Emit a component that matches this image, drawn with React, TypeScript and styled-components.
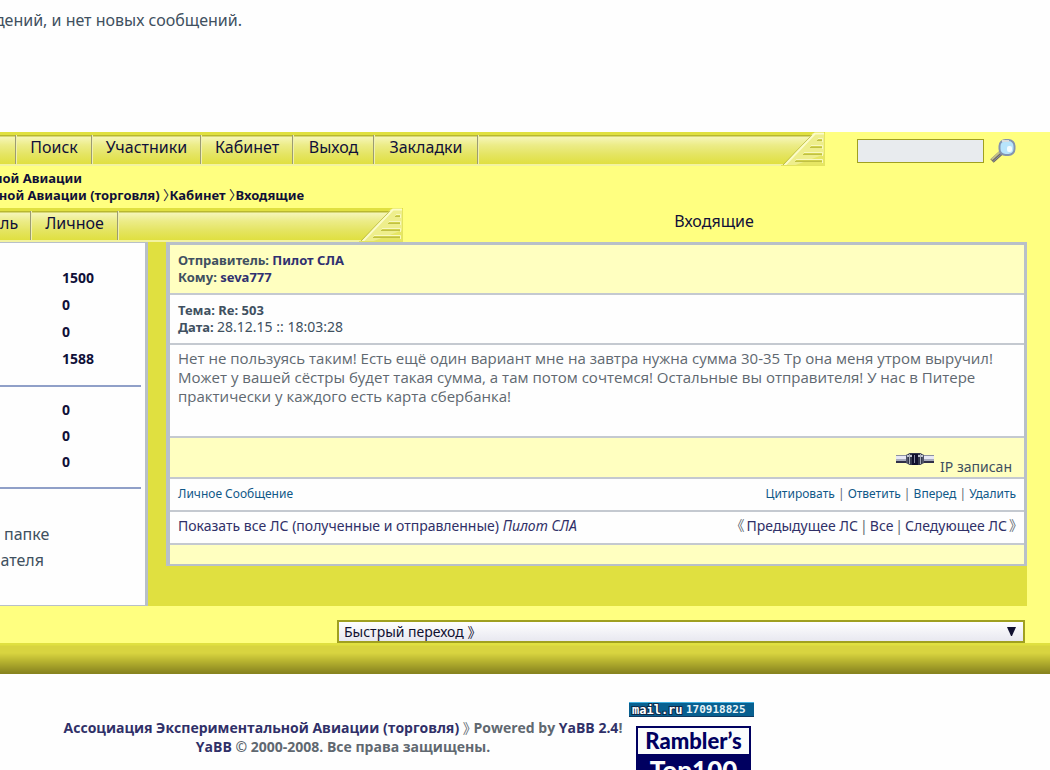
import React from "react";
import styled, { createGlobalStyle } from "styled-components";

const GlobalStyle = createGlobalStyle`
  * { box-sizing: border-box; }
  body {
    margin: 0;
    background: #fefefe;
    color: #606870;
    font-family: "Noto Sans", "Noto Sans CJK SC", sans-serif;
    font-size: 15px;
    line-height: 18px;
    overflow: hidden;
  }
  a { text-decoration: none; color: inherit; }
`;

const Welcome = styled.header`
  height: 132px;
  padding-top: 9px;
`;
const WelcomeText = styled.p`
  display: flex;
  justify-content: flex-end;
  width: 242px;
  margin: 0;
  overflow: hidden;
  white-space: nowrap;
  font-size: 16px;
  line-height: 22px;
  color: #405060;
`;
const Board = styled.main`
  background: #ffff80;
`;
const TopRow = styled.div`
  display: flex;
`;
const MenuBar = styled.nav<{ $width?: number }>`
  display: flex;
  flex: ${(p) => (p.$width ? `0 0 ${p.$width}px` : "1")};
  height: 34px;
  border-top: 3px solid #e0e040;
  border-bottom: 2px solid #f3f3a0;
  background: linear-gradient(#b8b830 0 1px, #f6f6b8 2px, #ecec88 10px, #e4e460 20px, #e0e040);
`;
const MenuItem = styled.a<{ $width: number; $end?: boolean }>`
  flex: 0 0 ${(p) => p.$width}px;
  padding-right: ${(p) => (p.$end ? 13 : 0)}px;
  border-right: 2px groove #f0f0b0;
  text-align: ${(p) => (p.$end ? "right" : "center")};
  font-size: 16px;
  line-height: 25px;
  color: #101038;
  overflow: hidden;
`;
const MenuEnd = styled.svg`
  display: block;
  width: 44px;
  height: 34px;
  margin: -3px 0 0 auto;
`;
const SearchForm = styled.form`
  display: flex;
  align-items: flex-start;
  gap: 5px;
  width: 225px;
  padding: 7px 0 0 32px;
`;
const SearchInput = styled.input`
  width: 127px;
  height: 24px;
  padding: 0 4px;
  border: 1px solid #a0a020;
  background: #e8ebee;
`;
const SearchButton = styled.button`
  width: 28px;
  height: 25px;
  padding: 0;
  border: 0;
  background: none;
`;
const Crumbs = styled.div`
  padding-top: 4px;
  height: 42px;
  font-size: 13px;
  font-weight: 700;
  line-height: 17px;
  color: #101038;
`;
const CrumbLine = styled.div<{ $width: number }>`
  display: flex;
  justify-content: flex-end;
  width: ${(p) => p.$width}px;
  overflow: hidden;
  white-space: nowrap;
`;
const Mark = styled.span`
  font-family: "Noto Sans CJK SC", sans-serif;
  font-feature-settings: "halt";
  font-weight: 400;
  line-height: 1;
`;
const PageTitle = styled.h1`
  flex: 1;
  margin: 0;
  padding-right: 25px;
  text-align: center;
  font-size: 16px;
  font-weight: 400;
  line-height: 27px;
  color: #101038;
`;
const Columns = styled.div`
  display: flex;
  gap: 18px;
  height: 364px;
  margin-right: 23px;
  background: #e0e040;
`;
const SidePanel = styled.aside`
  width: 148px;
  padding: 21px 4px 0 0;
  border: solid #b8c0c8;
  border-width: 1px 3px 1px 0;
  background: #fefefe;
`;
const CountList = styled.ul`
  height: 123px;
  margin: 0;
  padding: 0 0 0 62px;
  list-style: none;
  border-bottom: 2px solid #90a0c8;
  font-size: 14px;
  font-weight: 700;
  line-height: 27px;
  color: #101038;
  & + & { height: 102px; padding-top: 10px; line-height: 26px; }
`;
const SideNote = styled.p`
  display: flex;
  flex-direction: column;
  margin: 32px 0 0;
  padding-left: 4px;
  font-size: 16px;
  line-height: 26px;
  color: #405060;
`;
const NoteTail = styled.span`
  display: flex;
  justify-content: flex-end;
  width: 40px;
`;
const Message = styled.article`
  flex: 1;
  align-self: flex-start;
  border: solid #b8c0c8;
  border-width: 3px 3px 2px 4px;
`;
const Row = styled.div<{ $height: number; $top?: number; $tint?: boolean; $bottom?: boolean }>`
  display: flex;
  justify-content: space-between;
  align-items: ${(p) => (p.$bottom ? "flex-end" : "flex-start")};
  height: ${(p) => p.$height}px;
  padding: ${(p) => p.$top ?? 7}px 8px 0;
  border-bottom: 2px solid #c4c9d0;
  background: ${(p) => (p.$tint ? "#ffffc0" : "#fefefe")};
  white-space: nowrap;
  &:last-child { border-bottom: 0; }
`;
const Info = styled.div`
  font-size: 13px;
  line-height: 17px;
  color: #405060;
`;
const Strong = styled.a`
  font-weight: 700;
  color: #303070;
`;
const DateText = styled.span`
  font-size: 14px;
  line-height: 16px;
`;
const Body = styled.p`
  margin: 0;
  font-family: "Open Sans", "Noto Sans", sans-serif;
  font-size: 15px;
  line-height: 19px;
  white-space: normal;
`;
const IpNote = styled.span`
  display: flex;
  align-items: flex-end;
  gap: 6px;
  padding: 0 4px 1px 0;
  font-size: 14px;
  color: #405060;
`;
const Actions = styled.div`
  font-size: 12px;
  line-height: 17px;
  a { color: #105888; }
`;
const Pager = styled.div`
  display: flex;
  gap: 2px;
  font-size: 14px;
  line-height: 17px;
  a { color: #303068; }
`;
const JumpRow = styled.div`
  display: flex;
  justify-content: flex-end;
  padding: 14px 25px 0 337px;
`;
const JumpWrap = styled.div`
  position: relative;
  flex: 1;
`;
const JumpSelect = styled.select`
  display: block;
  width: 100%;
  height: 23px;
  padding: 0 5px;
  border: 2px solid #a0a020;
  border-radius: 0;
  appearance: none;
  background: linear-gradient(#fefefe, #e8e8f0);
  font-family: "Noto Sans", "Noto Sans CJK SC", sans-serif;
  font-feature-settings: "halt";
  font-size: 14px;
  color: #101030;
`;
const Arrow = styled.svg`
  position: absolute;
  right: 9px;
  top: 7px;
  width: 9px;
  height: 9px;
  pointer-events: none;
`;
const Shade = styled.div`
  height: 31px;
  background: linear-gradient(#e0e040 0 2px, #d8d440 3px 10px, #b8b430 18px, #888420 30px);
`;
const Footer = styled.footer`
  display: flex;
  gap: 6px;
  padding-top: 28px;
`;
const Copyright = styled.p`
  width: 623px;
  margin: 0;
  padding: 16px 0 0 63px;
  text-align: center;
  font-family: "Open Sans", "Noto Sans", sans-serif;
  font-size: 14px;
  font-weight: 700;
  line-height: 19px;
  white-space: nowrap;
  a { color: #303068; }
`;
const Counters = styled.div`
  display: flex;
  flex-direction: column;
  align-items: flex-end;
  gap: 9px;
`;
const MailCounter = styled.a`
  display: block;
  width: 125px;
  height: 15px;
`;
const Rambler = styled.a`
  display: flex;
  flex-direction: column;
  width: 115px;
  height: 60px;
  margin-right: 3px;
  border: 2px solid #000060;
  background: #000060;
  text-align: center;
  font-family: Lato, sans-serif;
  font-size: 22px;
  font-weight: 900;
  line-height: 26px;
`;
const RamblerTop = styled.span`
  background: #fafcfc;
  color: #000060;
`;
const RamblerBottom = styled.span`
  padding-top: 3px;
  color: #fafcfc;
  font-size: 26px;
`;

const End = () => (
  <MenuEnd viewBox="0 0 44 34" aria-hidden="true">
    <path d="M2 34L32 1H44V34Z" fill="#eeee8c" />
    <path d="M12 34L44 22V34Z" fill="#e6e664" />
    <path d="M1 34L31 3" stroke="#b4b438" />
    <path d="M3 34L34 1.500H43" stroke="#fcfcc8" strokeWidth="2" fill="none" />
    <path d="M43.500 1V34M0 33.500H43" stroke="#e4e460" />
    <path d="M36 8.500H41M29 15.500H41M22 22.500H41M14 29.500H41" stroke="#c0c044" />
    <path d="M37 7.500H41M30 14.500H41M23 21.500H41M15 28.500H41" stroke="#d2d24c" />
    <path d="M37 6.500H41.500V10M30 13.500H41.500V17M23 20.500H41.500V24M15 27.500H41.500V31" stroke="#f8f8c0" fill="none" />
  </MenuEnd>
);

const menu: [string, number][] = [
  ["", 17],
  ["Поиск", 76],
  ["Участники", 109],
  ["Кабинет", 92],
  ["Выход", 81],
  ["Закладки", 104],
];

export default function App() {
  return (
    <>
      <GlobalStyle />
      <Welcome>
        <WelcomeText>дений, и нет новых сообщений.</WelcomeText>
      </Welcome>
      <Board>
        <TopRow>
          <MenuBar>
            {menu.map(([label, width]) => (
              <MenuItem key={width} href="#" $width={width}>{label}</MenuItem>
            ))}
            <End />
          </MenuBar>
          <SearchForm>
            <SearchInput type="search" aria-label="Поиск" />
            <SearchButton type="button" aria-label="Поиск">
              <svg width="28" height="25" viewBox="0 0 28 25" aria-hidden="true">
                <path d="M3 22L13 13" stroke="#706c60" strokeWidth="5" />
                <path d="M2.500 20.500L12 12" stroke="#c4c08c" strokeWidth="2" />
                <path d="M4 22.500L13 14.500" stroke="#8c90b0" strokeWidth="1" />
                <rect x="10.500" y="1" width="15" height="15" rx="6" fill="#b8e4fc" stroke="#8494b0" strokeWidth="2" />
                <path d="M13 2H20" stroke="#d8dce0" strokeWidth="2" />
                <rect x="18" y="7" width="5" height="6" rx="2" fill="#f4fcff" />
              </svg>
            </SearchButton>
          </SearchForm>
        </TopRow>
        <Crumbs>
          <CrumbLine $width={82}>ной Авиации</CrumbLine>
          <CrumbLine $width={304}>
            <span>
              ной Авиации (торговля) <Mark>〉</Mark><a href="#">Кабинет</a> <Mark>〉</Mark><a href="#">Входящие</a>
            </span>
          </CrumbLine>
        </Crumbs>
        <TopRow>
          <MenuBar $width={403}>
            <MenuItem href="#" $width={32} $end>ль</MenuItem>
            <MenuItem href="#" $width={87}>Личное</MenuItem>
            <End />
          </MenuBar>
          <PageTitle>Входящие</PageTitle>
        </TopRow>
        <Columns>
          <SidePanel>
            <CountList><li>1500</li><li>0</li><li>0</li><li>1588</li></CountList>
            <CountList><li>0</li><li>0</li><li>0</li></CountList>
            <SideNote><span>папке</span><NoteTail>ателя</NoteTail></SideNote>
          </SidePanel>
          <Message>
            <Row $height={50} $tint>
              <Info>
                <b>Отправитель:</b> <Strong href="#">Пилот СЛА</Strong><br />
                <b>Кому:</b> <Strong href="#">seva777</Strong>
              </Info>
            </Row>
            <Row $height={50}>
              <Info><b>Тема: Re: 503</b><br /><b>Дата:</b> <DateText>28.12.15 :: 18:03:28</DateText></Info>
            </Row>
            <Row $height={93} $top={4}>
              <Body>
                Нет не пользуясь таким! Есть ещё один вариант мне на завтра нужна сумма 30-35 Тр она меня утром выручил! Может у вашей сёстры будет такая сумма, а там потом сочтемся! Остальные вы отправителя! У нас в Питере практически у каждого есть карта сбербанка!
              </Body>
            </Row>
            <Row $height={41} $tint $bottom>
              <span />
              <IpNote>
                <svg width="38" height="24" viewBox="0 0 38 24" aria-hidden="true">
                  <path d="M0 3.500H38" stroke="#8c90a0" />
                  <path d="M0 5.500H38" stroke="#e8e8f4" strokeWidth="3" />
                  <path d="M0 8H38" stroke="#a8acbc" strokeWidth="2" />
                  <path d="M0 10H38" stroke="#303048" strokeWidth="2" />
                  <rect x="10" y="2" width="18" height="10" rx="2" fill="#505468" />
                  <rect x="12" y="1" width="14" height="12" rx="2" fill="#34384c" />
                  <path d="M11 4H27" stroke="#c0c4d0" strokeWidth="2" />
                  <path d="M13.500 2V12M24.500 2V12" stroke="#a8acb8" />
                  <rect x="16" y="2" width="6" height="11" fill="#10102c" />
                  <path d="M18.500 3V11" stroke="#8488a0" />
                </svg>
                IP записан
              </IpNote>
            </Row>
            <Row $height={33} $top={6}>
              <Actions><a href="#">Личное Сообщение</a></Actions>
              <Actions>
                <a href="#">Цитировать</a> | <a href="#">Ответить</a> | <a href="#">Вперед</a> | <a href="#">Удалить</a>
              </Actions>
            </Row>
            <Row $height={33} $top={5}>
              <Pager><a href="#">Показать все ЛС (полученные и отправленные) <i>Пилот СЛА</i></a></Pager>
              <Pager>
                <Mark>《</Mark><a href="#">Предыдущее ЛС</a><span>|</span><a href="#">Все</a><span>|</span><a href="#">Следующее ЛС</a><Mark>》</Mark>
              </Pager>
            </Row>
            <Row $height={19} $tint />
          </Message>
        </Columns>
        <JumpRow>
          <JumpWrap>
            <JumpSelect aria-label="Быстрый переход"><option>Быстрый переход 》</option></JumpSelect>
            <Arrow viewBox="0 0 9 9" aria-hidden="true"><path d="M0 0H9L5 9H4Z" fill="#101030" /></Arrow>
          </JumpWrap>
        </JumpRow>
        <Shade />
      </Board>
      <Footer>
        <Copyright>
          <a href="#">Ассоциация Экспериментальной Авиации (торговля)</a> <Mark>》</Mark> Powered by <a href="#">YaBB 2.4</a>!<br />
          <a href="#">YaBB</a> © 2000-2008. Все права защищены.
        </Copyright>
        <Counters>
          <MailCounter href="#" aria-label="mail.ru">
            <svg width="125" height="15" viewBox="0 0 125 15">
              <rect width="125" height="15" fill="#086090" />
              <path d="M0 .5H125" stroke="#40b0e0" />
              <path d="M0 14.500H125" stroke="#103860" />
              <text x="3" y="12" fontFamily="DejaVu Sans Mono" fontWeight="700" fontSize="12" fill="#fff" stroke="#102848" strokeWidth="2" paintOrder="stroke">mail.ru</text>
              <text x="57" y="11" fontFamily="DejaVu Sans Mono" fontWeight="700" fontSize="11" fill="#e8f4f8">170918825</text>
            </svg>
          </MailCounter>
          <Rambler href="#"><RamblerTop>Rambler’s</RamblerTop><RamblerBottom>Top100</RamblerBottom></Rambler>
        </Counters>
      </Footer>
    </>
  );
}
